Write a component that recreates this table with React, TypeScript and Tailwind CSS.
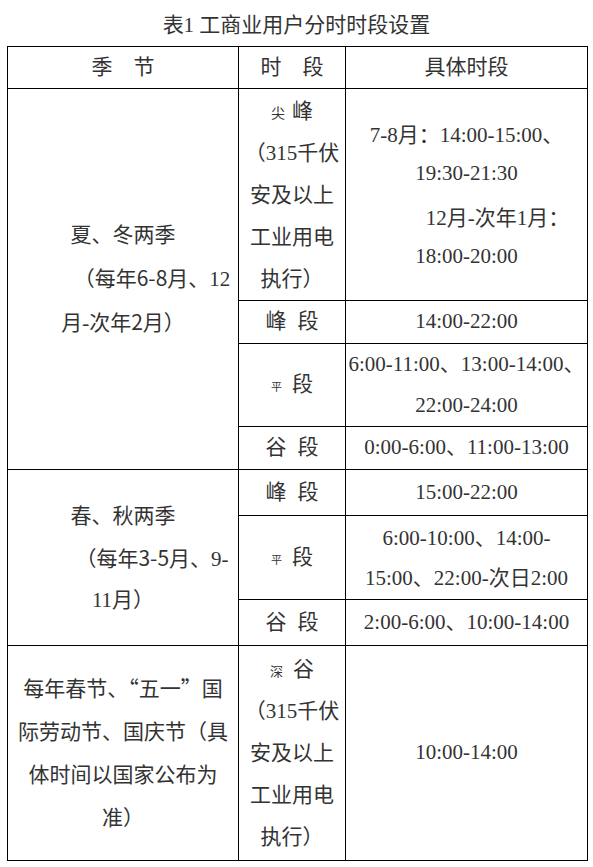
import React from "react";

const S = ({ children }: { children: React.ReactNode }) => (
  <span className="font-['Noto_Sans_CJK_SC',sans-serif]">{children}</span>
);

const Pair = ({ a, b, small, size, gap }: { a: string; b: string; small?: boolean; size?: string; gap: string }) => (
  <span className="inline-flex items-baseline">
    <span className={small ? `${size} leading-none` : ""}>{a}</span>
    <span className={gap}>{b}</span>
  </span>
);

const cell = "border border-black p-0 text-center align-middle";

export default function App() {
  return (
    <div className="w-[593px] h-[867px] bg-white text-[#333] text-[21px] font-['Liberation_Serif','Noto_Sans_CJK_SC',serif]">
      <div className="h-[46px] flex items-center justify-center pt-[5px]">表1 工商业用户分时时段设置</div>
      <table className="border-collapse table-fixed ml-[7px] w-[580px]">
        <colgroup>
          <col className="w-[231px]" />
          <col className="w-[107px]" />
          <col className="w-[242px]" />
        </colgroup>
        <tbody>
          <tr className="h-[42px]">
            <td className={cell}>季　节</td>
            <td className={cell}>时　段</td>
            <td className={cell}>具体时段</td>
          </tr>
          <tr className="h-[212px]">
            <td className={cell} rowSpan={4}>
              <div className="leading-[42px]">
                <div>夏、冬两季</div>
                <div className="pl-[58px]">
                  （每年<S>6-8</S>月、12
                </div>
                <div>
                  月-次年<S>2</S>月）
                </div>
              </div>
            </td>
            <td className={cell}>
              <div className="leading-[42px]">
                <div className="h-[42px]">
                  <Pair a="尖" b="峰" small size="text-[14px]" gap="ml-[7px]" />
                </div>
                <div>（315千伏</div>
                <div>安及以上</div>
                <div>工业用电</div>
                <div>执行）</div>
              </div>
            </td>
            <td className={cell}>
              <div className="leading-[38px] pt-[2px]">
                <div>7-8月：14:00-15:00、</div>
                <div>19:30-21:30</div>
                <div className="mt-[7px] pl-[62px]">12月-次年1月：</div>
                <div>18:00-20:00</div>
              </div>
            </td>
          </tr>
          <tr className="h-[43px]">
            <td className={cell}>
              <Pair a="峰" b="段" gap="ml-[11px]" />
            </td>
            <td className={cell}>14:00-22:00</td>
          </tr>
          <tr className="h-[82px]">
            <td className={cell}>
              <Pair a="平" b="段" small size="text-[11px]" gap="ml-[10px]" />
            </td>
            <td className={cell}>
              <div className="leading-[41px]">
                <div>6:00-11:00、13:00-14:00、</div>
                <div>22:00-24:00</div>
              </div>
            </td>
          </tr>
          <tr className="h-[43px]">
            <td className={cell}>
              <Pair a="谷" b="段" gap="ml-[11px]" />
            </td>
            <td className={cell}>0:00-6:00、11:00-13:00</td>
          </tr>
          <tr className="h-[46px]">
            <td className={cell} rowSpan={3}>
              <div className="leading-[41px] pt-[2px]">
                <div>春、秋两季</div>
                <div className="pl-[58px]">
                  （每年<S>3-5</S>月、9-
                </div>
                <div>11月）</div>
              </div>
            </td>
            <td className={cell}>
              <Pair a="峰" b="段" gap="ml-[11px]" />
            </td>
            <td className={cell}>15:00-22:00</td>
          </tr>
          <tr className="h-[84px]">
            <td className={cell}>
              <Pair a="平" b="段" small size="text-[11px]" gap="ml-[10px]" />
            </td>
            <td className={cell}>
              <div className="leading-[40px]">
                <div>6:00-10:00、14:00-</div>
                <div>15:00、22:00-次日2:00</div>
              </div>
            </td>
          </tr>
          <tr className="h-[46px]">
            <td className={cell}>
              <Pair a="谷" b="段" gap="ml-[11px]" />
            </td>
            <td className={cell}>2:00-6:00、10:00-14:00</td>
          </tr>
          <tr className="h-[215px]">
            <td className={cell}>
              <div className="leading-[43px]">
                <div>
                  每年春节、<S>“</S>五一<S>”</S>国
                </div>
                <div>际劳动节、国庆节（具</div>
                <div>体时间以国家公布为</div>
                <div>准）</div>
              </div>
            </td>
            <td className={cell}>
              <div className="leading-[42px]">
                <div className="h-[42px]">
                  <Pair a="深" b="谷" small size="text-[13px]" gap="ml-[10px]" />
                </div>
                <div>（315千伏</div>
                <div>安及以上</div>
                <div>工业用电</div>
                <div>执行）</div>
              </div>
            </td>
            <td className={cell}>10:00-14:00</td>
          </tr>
        </tbody>
      </table>
    </div>
  );
}
